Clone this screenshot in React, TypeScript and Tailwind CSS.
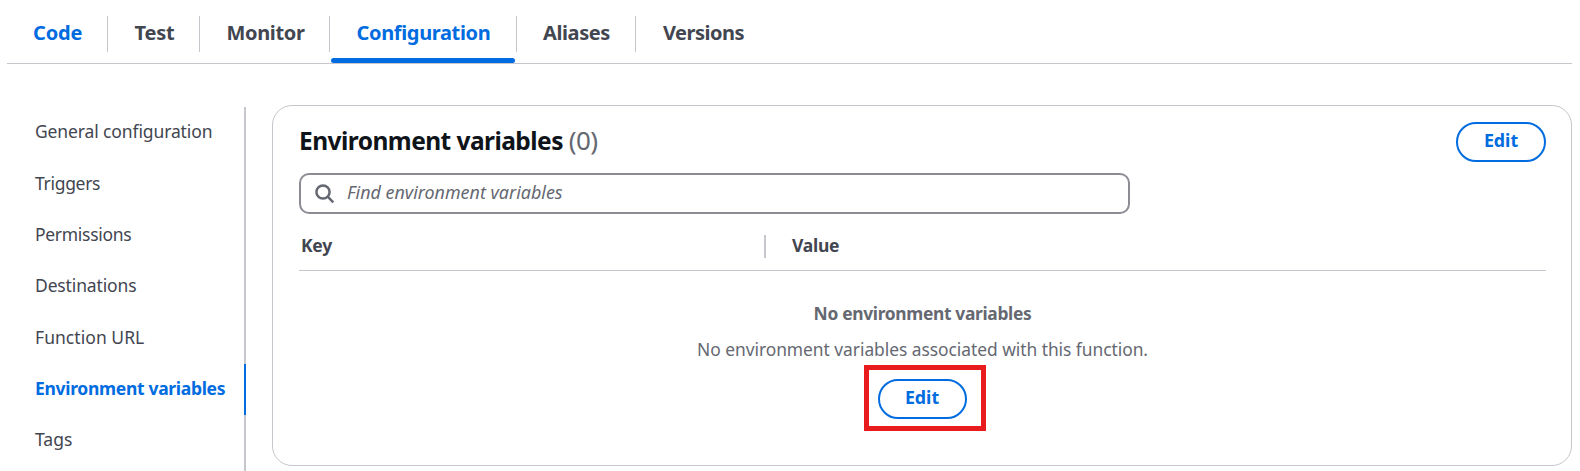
type Tab = { label: string; className: string; active?: boolean; link?: boolean };

const tabs: Tab[] = [
  { label: "Code", className: "w-[101px] pl-[26px] tracking-[-0.2px]", link: true },
  { label: "Test", className: "w-[92px] pl-[26.5px] tracking-[-0.2px]" },
  { label: "Monitor", className: "w-[130px] pl-[26.5px] tracking-[-0.35px]" },
  { label: "Configuration", className: "w-[187px] pl-[26.6px] tracking-[-0.36px]", active: true },
  { label: "Aliases", className: "w-[119px] pl-[26px] tracking-[-0.4px]" },
  { label: "Versions", className: "w-[140px] pl-[27px] tracking-[-0.5px]" },
];

const navItems = [
  { label: "General configuration", spacing: "h-[51px] tracking-[-0.12px]" },
  { label: "Triggers", spacing: "h-[52px] tracking-[-0.3px]" },
  { label: "Permissions", spacing: "h-[51px] tracking-[-0.3px]" },
  { label: "Destinations", spacing: "h-[51px] tracking-[-0.14px]" },
  { label: "Function URL", spacing: "h-[52px] tracking-[0.05px]" },
  { label: "Environment variables", spacing: "h-[51px] tracking-[-0.31px]", active: true },
  { label: "Tags", spacing: "h-[51px] tracking-normal" },
];

function EditButton({ width }: { width: string }) {
  return (
    <button
      className={`flex h-10 items-center justify-center rounded-full border-2 border-[#006ce0] pb-1 text-[17.8px] leading-6 font-bold text-[#006ce0] ${width}`}
    >
      Edit
    </button>
  );
}

function SearchIcon() {
  return (
    <svg width="20" height="20" viewBox="0 0 20 20" fill="none" stroke="#656871" strokeWidth="2.5">
      <circle cx="8" cy="8" r="6.6" />
      <path d="M12.7 12.7l5.6 5.6" />
    </svg>
  );
}

function TabBar() {
  return (
    <nav className="mr-2 ml-[7px] flex h-16 border-b border-[#c6c6cd]">
      {tabs.map((tab, i) => (
        <div key={tab.label} className={`relative h-full shrink-0 pt-[17px] ${tab.className}`}>
          <span
            className={`block text-xl leading-8 font-bold ${
              tab.active || tab.link ? "text-[#006ce0]" : "text-[#424650]"
            }`}
          >
            {tab.label}
          </span>
          {i < tabs.length - 1 && <span className="absolute top-4 right-0 h-9 w-px bg-[#c6c6cd]" />}
          {tab.active && (
            <span className="absolute right-[2px] bottom-0 left-[1px] h-[5px] rounded-full bg-[#006ce0]" />
          )}
        </div>
      ))}
    </nav>
  );
}

function SideNav() {
  return (
    <aside className="flex h-[366px] w-[246px] shrink-0 flex-col pt-[2px]">
      {navItems.map((item) => (
        <div
          key={item.label}
          className={`flex shrink-0 items-center border-r-2 pb-[3px] pl-[35px] text-[17.5px] leading-6 whitespace-nowrap ${item.spacing} ${
            item.active ? "border-[#006ce0] font-bold text-[#006ce0]" : "border-[#c6c6cd] text-[#424650]"
          }`}
        >
          {item.label}
        </div>
      ))}
      <div className="flex-1 border-r-2 border-[#c6c6cd]" />
    </aside>
  );
}

function VariablesPanel() {
  return (
    <section className="mr-2 ml-[26px] h-[361px] flex-1 rounded-[20px] border border-[#c6c6cd] pt-4 pr-[25px] pl-[26px]">
      <div className="flex h-[51px] items-start justify-between">
        <h2 className="pt-px text-[24.5px] leading-[34px] font-bold tracking-[-0.55px] text-[#0f141a]">
          Environment variables <span className="text-[26px] font-normal text-[#656871]">(0)</span>
        </h2>
        <EditButton width="w-[90px]" />
      </div>
      <div className="flex h-[41px] w-[831px] items-center gap-3 rounded-[10px] border-2 border-[#8c8c94] pl-[14px]">
        <SearchIcon />
        <span className="pb-[3px] text-[17.9px] leading-6 text-[#656871] italic">Find environment variables</span>
      </div>
      <div className="flex h-[57px] border-b border-[#c6c6cd] pt-[21px] text-[17.5px] leading-6 font-bold tracking-[-0.25px] text-[#424650]">
        <div className="h-[23px] w-[467px] border-r-2 border-[#c6c6cd] pl-[2px]">
          <span className="relative -top-[2px]">Key</span>
        </div>
        <div className="pl-[26px]">
          <span className="relative -top-[2px]">Value</span>
        </div>
      </div>
      <div className="flex flex-col items-center text-[17.4px] leading-6 text-[#656871]">
        <p className="mt-[30px] font-bold tracking-[-0.33px]">No environment variables</p>
        <p className="mt-3 tracking-[-0.04px]">No environment variables associated with this function.</p>
        <div className="mt-1 ml-[4px] flex h-[66px] w-[122px] items-center justify-center border-[5px] border-[#e81c1c] pt-[2px] pr-[5px]">
          <EditButton width="w-[89px]" />
        </div>
      </div>
    </section>
  );
}

export default function App() {
  return (
    <div className="h-[471px] overflow-hidden bg-white font-['Noto_Sans',sans-serif]">
      <TabBar />
      <main className="flex items-start pt-[41px]">
        <SideNav />
        <VariablesPanel />
      </main>
    </div>
  );
}
